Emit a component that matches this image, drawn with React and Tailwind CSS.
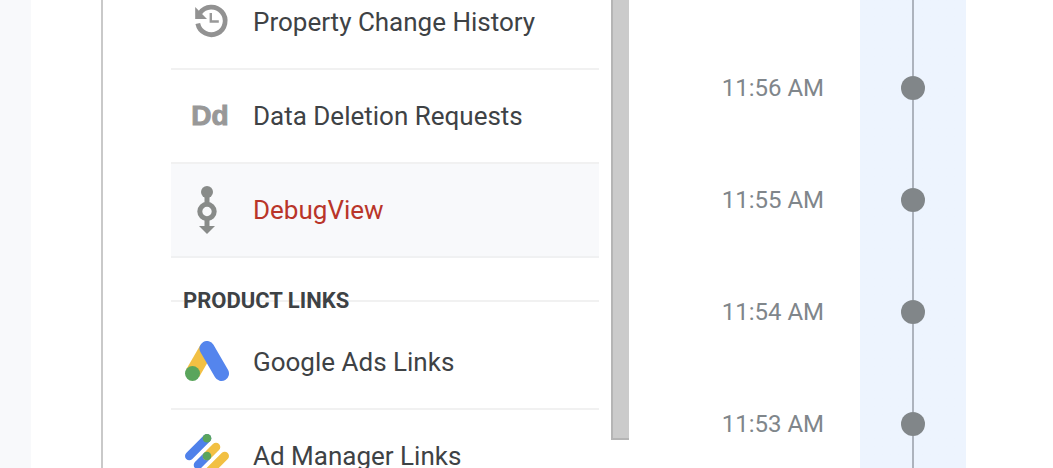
function HistoryIcon() {
  return (
    <svg width="44" height="44" viewBox="0 0 44 44" fill="none">
      <path
        d="M15 13A13.8 13.8 0 1 1 12.800 23.500"
        stroke="#929292"
        strokeWidth="4.800"
      />
      <path d="M10.200 7v12h11.800z" fill="#929292" />
      <path d="M25.800 13v8.500h8" stroke="#999999" strokeWidth="2.4" />
    </svg>
  );
}

function DebugIcon() {
  return (
    <svg width="44" height="48" viewBox="0 0 44 48" fill="#888b89">
      <circle cx="22" cy="6" r="6" />
      <path d="M19.5 8h5v10h-5zM19.5 33h5v7H30l-8 8-8-8h5.500z" />
      <circle
        cx="22"
        cy="25.500"
        r="7.2"
        fill="none"
        stroke="#888b89"
        strokeWidth="5"
      />
    </svg>
  );
}

function AdsIcon() {
  return (
    <svg width="44" height="42" viewBox="0 0 44 42" strokeLinecap="round">
      <path d="M7.500 32.500L22 7.500" stroke="#f2c043" strokeWidth="15" strokeLinecap="butt" />
      <path d="M22 7.500l14.500 25" stroke="#5485ed" strokeWidth="15" />
      <circle cx="7.500" cy="32.500" r="7.500" fill="#5aa55c" />
    </svg>
  );
}

function AdManagerIcon() {
  return (
    <svg width="44" height="44" viewBox="0 0 44 44" strokeWidth="8.600" strokeLinecap="round">
      <path d="M4.300 22L22 4.300M13 31l9-9" stroke="#4f81ea" />
      <path d="M22 22l9-9M22 39.700L39.700 22" stroke="#f2c043" />
      <circle cx="22" cy="4.300" r="4.300" fill="#5aa55c" />
      <circle cx="22" cy="22" r="4.300" fill="#5aa55c" />
      <circle cx="22" cy="39.700" r="4.300" fill="#5aa55c" />
    </svg>
  );
}

function MenuItem({ icon, label, active }) {
  return (
    <li>
      <a
        href="#"
        className={`flex items-center h-[94px] pl-[14px] border-b-2 text-[26px] ${
          active
            ? "bg-[#f8f9fb] border-[#f0f1f2] text-[#b93529]"
            : "border-[#f1f1f1] text-[#3e4245]"
        }`}
      >
        <span className="flex justify-center w-11 mr-6">{icon}</span>
        {label}
      </a>
    </li>
  );
}

const times = ["11:56 AM", "11:55 AM", "11:54 AM", "11:53 AM"];

export default function App() {
  return (
    <div className="flex h-screen overflow-hidden bg-white font-[Roboto,sans-serif]">
      <div className="w-[31px] shrink-0 bg-[#f8f9fb]" />

      <nav className="flex w-[598px] shrink-0 pl-[70px]">
        <div className="w-0.5 mr-[68px] bg-[#c9c9c9]" />
        <div className="flex-1 -mt-6">
          <ul>
            <MenuItem icon={<HistoryIcon />} label="Property Change History" />
            <MenuItem
              icon={
                <span className="pl-1.5 text-[28px] font-bold text-[#989898] font-['Liberation_Sans',sans-serif] [-webkit-text-stroke:1px_#989898]">
                  Dd
                </span>
              }
              label="Data Deletion Requests"
            />
            <MenuItem icon={<DebugIcon />} label="DebugView" active />
          </ul>

          <div className="grid items-center h-[58px] pt-7">
            <hr className="col-start-1 row-start-1 border-t-2 border-[#f1f1f1]" />
            <h2 className="col-start-1 row-start-1 pl-3 text-[22px] leading-7 font-bold text-[#3e4245]">
              PRODUCT LINKS
            </h2>
          </div>

          <ul>
            <MenuItem icon={<AdsIcon />} label="Google Ads Links" />
            <MenuItem icon={<AdManagerIcon />} label="Ad Manager Links" />
          </ul>
        </div>
        <div className="w-[18px] ml-3 mb-7 bg-[#cbcbcb] border-l-2 border-b-2 border-[#b5b5b5]" />
      </nav>

      <main className="flex-1 mr-[87px] bg-linear-to-l from-[#edf4fe] from-[106px] to-transparent to-[106px]">
        <div className="h-8 flex justify-end">
          <div className="w-0.5 mr-[52px] bg-[#adb3bd]" />
        </div>
        <ol>
          {times.map((time) => (
            <li key={time} className="flex items-center h-28">
              <time className="flex-1 pr-9 text-right text-2xl text-[#80868b]">
                {time}
              </time>
              <div className="flex flex-col items-center w-[106px] h-full">
                <div className="flex-1 w-0.5 bg-[#adb3bd]" />
                <div className="size-6 rounded-full bg-[#818689]" />
                <div className="flex-1 w-0.5 bg-[#adb3bd]" />
              </div>
            </li>
          ))}
        </ol>
      </main>
    </div>
  );
}
